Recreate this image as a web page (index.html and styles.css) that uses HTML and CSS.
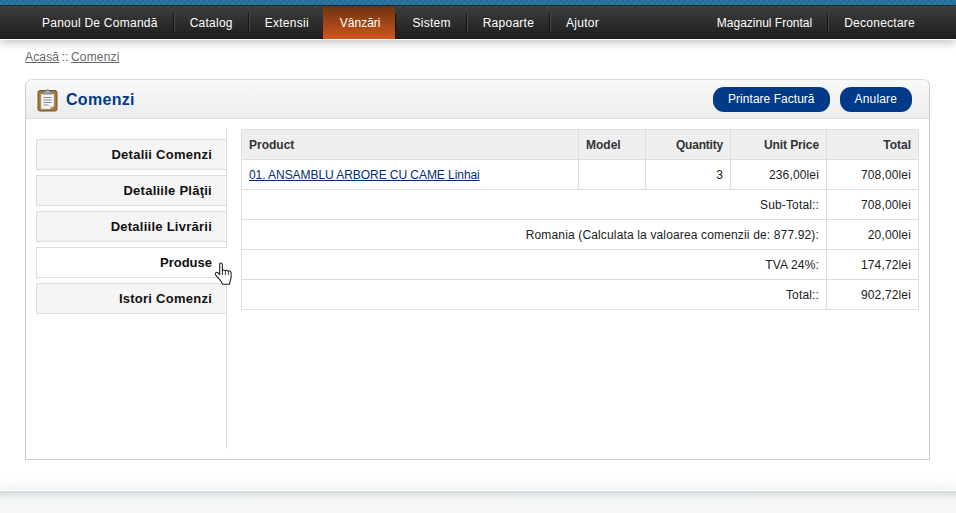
FILE: index.html
```html
<!DOCTYPE html>
<html lang="ro">
<head>
<meta charset="utf-8">
<title>Comenzi</title>
<link rel="stylesheet" href="styles.css">
</head>
<body>
<header class="header">
  <div class="stripe"></div>
  <nav class="menu">
    <ul class="menu-left">
      <li><a href="#">Panoul De Comandă</a></li>
      <li><a href="#">Catalog</a></li>
      <li><a href="#">Extensii</a></li>
      <li class="active"><a href="#">Vânzări</a></li>
      <li><a href="#">Sistem</a></li>
      <li><a href="#">Rapoarte</a></li>
      <li class="last"><a href="#">Ajutor</a></li>
    </ul>
    <ul class="menu-right">
      <li class="plain"><a href="#">Magazinul Frontal</a></li>
      <li class="last"><a href="#">Deconectare</a></li>
    </ul>
  </nav>
</header>
<main class="content">
  <div class="breadcrumb"><a href="#">Acasă</a> :: <a href="#">Comenzi</a></div>
  <section class="box">
    <div class="heading">
      <h1>
        <svg class="order-icon" width="22" height="24" viewBox="0 0 22 24">
          <rect x="1" y="2.500" width="19" height="20.500" rx="2" fill="#a8783a" stroke="#7a5420"/>
          <path d="M4 6h13v12l-4 3H4z" fill="#f4f4f2" stroke="#b9b9b4" stroke-width=".6"/>
          <path d="M13 21l4-3h-4z" fill="#cfcfca"/>
          <path d="M6.500 9.500h8M6.500 12h8M6.500 14.500h8M6.500 17h5" stroke="#8d8d88"/>
          <path d="M6 6V3.500h2.500C8.500 1 12.500 1 12.500 3.500H15V6z" fill="#a3a5a6" stroke="#6f7172" stroke-width=".7"/>
        </svg>
        <span>Comenzi</span>
      </h1>
      <div class="buttons">
        <a class="button button-print" href="#">Printare Factură</a>
        <a class="button" href="#">Anulare</a>
      </div>
    </div>
    <div class="panel">
      <ul class="tabs">
        <li><a href="#">Detalii Comenzi</a></li>
        <li><a href="#">Detaliile Plăţii</a></li>
        <li><a href="#">Detaliile Livrării</a></li>
        <li class="selected"><a href="#">Produse</a></li>
        <li><a href="#">Istori Comenzi</a></li>
      </ul>
      <div class="tab-content">
        <table class="list">
          <thead>
            <tr>
              <th class="col-product left">Product</th>
              <th class="col-model left">Model</th>
              <th class="col-qty">Quantity</th>
              <th class="col-price">Unit Price</th>
              <th class="col-total">Total</th>
            </tr>
          </thead>
          <tbody>
            <tr>
              <td class="left"><a href="#">01. ANSAMBLU ARBORE CU CAME Linhai</a></td>
              <td></td>
              <td>3</td>
              <td>236,00lei</td>
              <td>708,00lei</td>
            </tr>
            <tr><td colspan="4">Sub-Total::</td><td>708,00lei</td></tr>
            <tr><td colspan="4">Romania (Calculata la valoarea comenzii de: 877.92):</td><td>20,00lei</td></tr>
            <tr><td colspan="4">TVA 24%:</td><td>174,72lei</td></tr>
            <tr><td colspan="4">Total::</td><td>902,72lei</td></tr>
          </tbody>
        </table>
      </div>
    </div>
  </section>
</main>
<footer class="footer"></footer>
<svg class="cursor" width="20" height="26" viewBox="0 0 18 24">
  <path d="M5 1.500c1-1 2.500-.500 2.500 1V8.500c.2-1.500 2.500-1.500 2.800 0 .3-1.300 2.400-1.200 2.700.3.500-.9 2.300-.700 2.500.8.300 2.500.2 5-.5 7-.4 1.300-.8 2-.8 3.900H7.500c0-1.500-1-2.500-2-3.700L1.200 11.800c-1-1.600.9-3 2.300-1.700L5 11.700z" fill="#fff" stroke="#222" stroke-width="1" stroke-linejoin="round"/>
  <path d="M7.500 8.500V12M10.300 8.500V12M13 8.800V12" stroke="#222" stroke-width=".8" fill="none"/>
</svg>
</body>
</html>
```
FILE: styles.css
```css
* { box-sizing: border-box; }
html, body { margin: 0; padding: 0; }
body {
  position: relative;
  width: 956px;
  height: 513px;
  overflow: hidden;
  background: #fff;
  font-family: "Liberation Sans", Arial, sans-serif;
  font-size: 12px;
  color: #000;
}
ul { list-style: none; margin: 0; padding: 0; }

.stripe {
  height: 5px;
  background: repeating-linear-gradient(135deg, #1c6c9e 0 2px, #2478a9 2px 4px);
}
.menu {
  display: flex;
  justify-content: space-between;
  height: 35px;
  padding: 2px 26px 0 26px;
  border-top: 1px solid #1c2a33;
  border-bottom: 1px solid #fff;
  background: linear-gradient(#3e3e3e, #1d1d1d);
  box-shadow: 0 1px 10px rgba(110, 110, 110, .55);
  letter-spacing: .25px;
}
.menu ul { display: flex; }
.menu li { display: flex; height: 31px; }
.menu a {
  display: flex;
  align-items: center;
  height: 18px;
  margin-top: 6px;
  padding: 0 15px 0 16px;
  border-right: 1px solid #111;
  box-shadow: 1px 0 0 #4a4a4a;
  color: #fff;
  text-decoration: none;
}
.menu li.last a { border-right: 0; box-shadow: none; }
.menu li.plain { letter-spacing: 0; }
.menu li.active {
  position: relative;
  margin: -1px 2px 0 -2px;
  height: 32px;
  background: linear-gradient(#6f3310, #d0571d);
  letter-spacing: 0;
}
.menu li.active::after {
  content: "";
  position: absolute;
  left: 100%;
  top: 7px;
  width: 1px;
  height: 18px;
  background: #111;
}
.menu li.active a { margin-top: 7px; border-right: 0; box-shadow: none; padding: 0 14px 0 17px; }

.content { padding: 0 26px 0 25px; }
.breadcrumb {
  height: 39px;
  padding-top: 10px;
  color: #666;
  line-height: 15px;
  letter-spacing: .15px;
  word-spacing: -1px;
}
.breadcrumb a { color: #666; }

.box {
  height: 381px;
  border: 1px solid #ccc;
  border-top-color: #ddd;
  border-radius: 7px 7px 0 0;
}
.heading {
  display: flex;
  justify-content: space-between;
  align-items: center;
  height: 39px;
  padding: 0 17px 0 11px;
  border-bottom: 1px solid #dbdbdb;
  border-radius: 7px 7px 0 0;
  background: linear-gradient(#f9f9f9, #ececec);
}
.heading h1 {
  display: flex;
  align-items: center;
  gap: 7px;
  margin: 0;
  padding-top: 1px;
  color: #003a88;
  font-size: 16px;
  font-weight: bold;
  letter-spacing: .3px;
}
.buttons { display: flex; gap: 10px; }
.button {
  display: block;
  height: 25px;
  padding: 0 15px;
  border-radius: 11px;
  background: #003a88;
  color: #fff;
  line-height: 25px;
  letter-spacing: .15px;
  text-decoration: none;
}
.button-print { letter-spacing: .03px; }

.panel { display: flex; padding: 10px 10px 0; }
.tabs {
  flex: none;
  width: 191px;
  height: 320px;
  padding-top: 10px;
  border-right: 1px solid #ddd;
  font-size: 13px;
  font-weight: bold;
  letter-spacing: .25px;
}
.tabs li { margin-bottom: 5px; }
.tabs a {
  display: block;
  height: 31px;
  padding-right: 14px;
  border: 1px solid #ddd;
  border-right: 0;
  background: #f5f5f5;
  color: #111;
  line-height: 29px;
  text-align: right;
  text-decoration: none;
}
.tabs .selected a {
  margin-right: -1px;
  padding-right: 15px;
  background: #fff;
  letter-spacing: 0;
}

.tab-content { flex: none; padding-left: 14px; }
.list {
  width: 678px;
  border-collapse: separate;
  border-spacing: 0;
  table-layout: fixed;
  border-top: 1px solid #ddd;
  border-left: 1px solid #ddd;
}
.list th, .list td {
  height: 30px;
  padding: 0 7px;
  border-right: 1px solid #ddd;
  border-bottom: 1px solid #ddd;
  color: #222;
  text-align: right;
  font-weight: normal;
  letter-spacing: .15px;
  white-space: nowrap;
}
.list th {
  background: #efefef;
  color: #333;
  font-weight: bold;
  letter-spacing: 0;
}
.list .left { text-align: left; }
.list a { color: #00306e; letter-spacing: -.06px; }
.col-product { width: 337px; }
.col-model { width: 67px; }
.list .col-qty { width: 85px; letter-spacing: -.2px; }
.list .col-price { width: 96px; letter-spacing: -.1px; }
.col-total { width: 92px; }

.footer {
  position: absolute;
  left: 0;
  right: 0;
  top: 491px;
  height: 22px;
  background: linear-gradient(#d3dadb, #eef0f1 7px, #f4f6f7 9px);
  box-shadow: 0 -1px 0 #fff, 0 -3px 12px rgba(200, 210, 215, .45);
}
.cursor { position: absolute; left: 214px; top: 262px; }
```
